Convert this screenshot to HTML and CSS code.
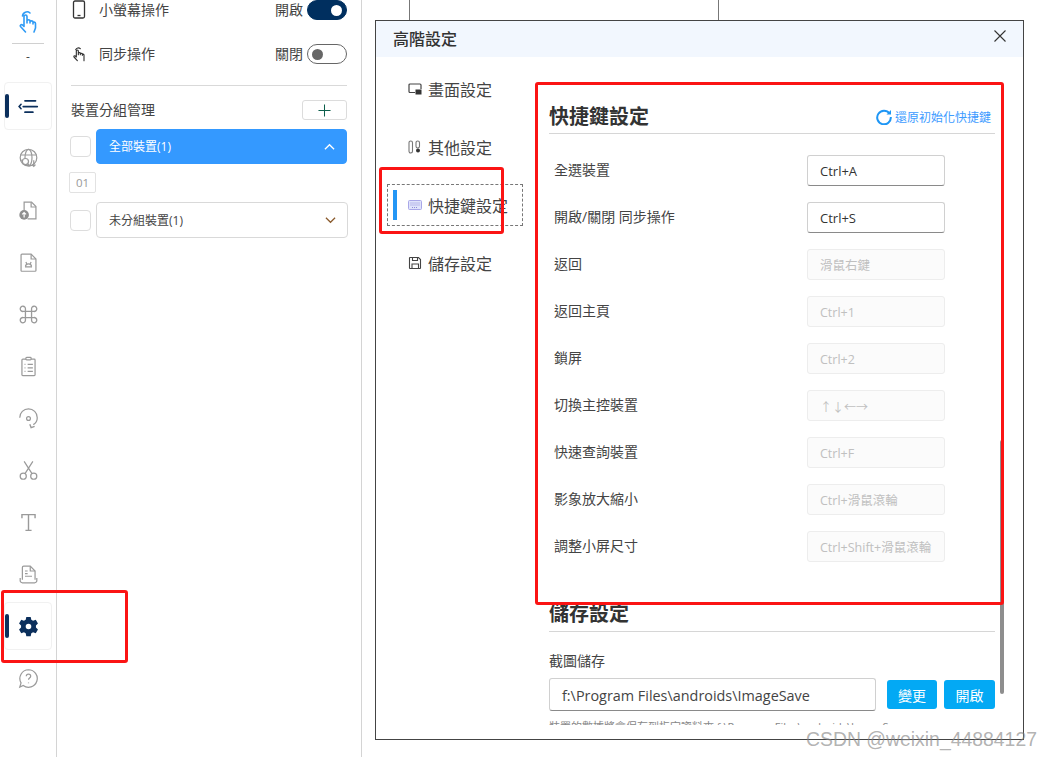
FILE: index.html
```html
<!DOCTYPE html>
<html lang="zh-Hant">
<head>
<meta charset="utf-8">
<title>高階設定</title>
<link rel="stylesheet" href="styles.css">
</head>
<body>
<div class="app">
  <nav class="rail">
    <div class="rail-top">
      <svg class="ico-top" viewBox="0 0 24 24" fill="none" stroke="#2f9bf5" stroke-width="1.600" stroke-linecap="round" stroke-linejoin="round"><path d="M6.500 6a4.500 4.500 0 0 1 7.500-3M9.500 22l-5-5.500c-.8-1 .5-2.500 2-1.500l1.500 1.500V6.500c0-2 3-2 3 0V13m0-2c0-1.600 3-1.600 3 0v2m0-1c0-1.500 3-1.500 3 0v2m0-1c0-1.300 2.500-1.300 2.500 .5V18l-1.500 4"/></svg>
      <div class="rail-rule"></div>
      <div class="rail-dash">-</div>
    </div>
    <div class="rail-item active"><span class="mark"></span>
      <svg class="ico" viewBox="0 0 24 24" fill="none" stroke="#0b2f5c" stroke-width="2" stroke-linecap="round"><path d="M8 5.500h12M6 12h16M8 18.500h9"/><path d="M3.500 9.500 1.300 12l2.200 2.500" stroke-width="1.800"/></svg>
    </div>
    <div class="rail-item">
      <svg class="ico" viewBox="0 0 24 24" fill="none" stroke="#9a9a9a" stroke-width="1.400"><circle cx="12" cy="11" r="9.500"/><ellipse cx="12" cy="11" rx="4" ry="9.500"/><path d="M2.500 8h19M2.500 14h7"/><circle cx="8.500" cy="15.500" r="3.500" fill="#fff"/><path d="m11 18 3 3M18 14v7m-2-2 2 2 2-2"/></svg>
    </div>
    <div class="rail-item">
      <svg class="ico" viewBox="0 0 24 24" fill="none" stroke="#9a9a9a" stroke-width="1.400"><path d="M7 12V2.500h8.500l5 5v14H11"/><path d="M15 2.500V8h5.500"/><circle cx="7" cy="17" r="5.500" fill="#8f8f8f" stroke="none"/><path d="M7 20v-5.500m-2.200 2 2.200-2.200 2.200 2.200" stroke="#fff"/></svg>
    </div>
    <div class="rail-item">
      <svg class="ico" viewBox="0 0 24 24" fill="none" stroke="#9a9a9a" stroke-width="1.400"><path d="M4.500 2.500H15l5.500 5.500v13a1 1 0 0 1-1 1h-15a1 1 0 0 1-1-1V3.500a1 1 0 0 1 1-1z"/><path d="M15 2.500V8h5.500M8 17h8M8.500 16.500c.5-4 6.500-4 7 0M9 11.500l1 2M15 11.500l-1 2"/></svg>
    </div>
    <div class="rail-item">
      <svg class="ico" viewBox="0 0 24 24" fill="none" stroke="#9a9a9a" stroke-width="1.500"><path d="M8.500 8.500h7v7h-7zM8.500 8.500H6A3 3 0 1 1 8.500 6v2.500zM15.500 8.500H18A3 3 0 1 0 15.500 6v2.500zM8.500 15.500H6A3 3 0 1 0 8.500 18v-2.500zM15.500 15.500H18A3 3 0 1 1 15.500 18v-2.500z"/></svg>
    </div>
    <div class="rail-item">
      <svg class="ico" viewBox="0 0 24 24" fill="none" stroke="#9a9a9a" stroke-width="1.400"><rect x="4.500" y="3.500" width="15" height="19" rx="1"/><rect x="9" y="1.500" width="6" height="3" rx="1" fill="#fff"/><path d="M11 9.500h6M11 13.500h6M11 17.500h6M7.500 9.500h1M7.500 13.500h1M7.500 17.500h1"/></svg>
    </div>
    <div class="rail-item">
      <svg class="ico" viewBox="0 0 24 24" fill="none" stroke="#9a9a9a" stroke-width="1.400"><path d="M2 11a10 10 0 0 1 20 0c0 3.500-2 6.500-4.500 8"/><circle cx="12" cy="12" r="2.200"/><path d="M13.500 18.500l1.500 4 4-1.500" stroke-width="1.600"/></svg>
    </div>
    <div class="rail-item">
      <svg class="ico" viewBox="0 0 24 24" fill="none" stroke="#9a9a9a" stroke-width="1.400"><circle cx="6" cy="18.500" r="3.500"/><circle cx="18" cy="18.500" r="3.500"/><path d="M8 15.500 17 1.500M16 15.500 7 1.500"/></svg>
    </div>
    <div class="rail-item">
      <svg class="ico" viewBox="0 0 24 24" fill="none" stroke="#9a9a9a" stroke-width="1.600"><path d="M4.500 7V3h15v4M12 3v18M8.500 21h7"/></svg>
    </div>
    <div class="rail-item">
      <svg class="ico" viewBox="0 0 24 24" fill="none" stroke="#9a9a9a" stroke-width="1.400"><path d="M5 18V4a1.500 1.500 0 0 1 1.500-1.500H14l5.500 5.500v10"/><path d="M14 2.500V8h5.500M8 8h3M8 11h3M8 14h8"/><path d="M2.500 16v3a2.500 2.500 0 0 0 2.500 2.500h14a2.500 2.500 0 0 0 2.500-2.500v-3"/></svg>
    </div>
    <div class="rail-item active"><span class="mark"></span>
      <svg class="ico" viewBox="0 0 24 24"><path fill="#0b2f5c" fill-rule="evenodd" d="M9.500 1h5l.7 3.200 2 1.200 3.100-1 2.500 4.300-2.300 2.200v2.200l2.300 2.200-2.500 4.300-3.100-1-2 1.200-.7 3.200h-5l-.7-3.200-2-1.200-3.100 1L1.200 15.300l2.300-2.200v-2.200L1.200 8.700l2.500-4.300 3.100 1 2-1.200zM12 8.800a3.200 3.200 0 1 0 0 6.400 3.200 3.200 0 0 0 0-6.400z"/></svg>
    </div>
    <div class="rail-item">
      <svg class="ico" viewBox="0 0 24 24" fill="none" stroke="#9a9a9a" stroke-width="1.400"><path d="M12 2a10 10 0 1 1-6 18l-4 1.800L3.500 17A10 10 0 0 1 12 2z"/><path d="M9.500 9.500c0-3.200 5-3.200 5 0 0 2-2.500 2-2.500 4M12 16.500v1"/></svg>
    </div>
  </nav>

  <aside class="panel">
    <div class="op-row">
      <svg class="op-ico" viewBox="0 0 16 20" fill="none" stroke="#333" stroke-width="1.300"><rect x="2.500" y="1" width="11" height="17" rx="1.500"/><path d="M6.500 15.500h3"/></svg>
      <span class="op-label">小螢幕操作</span>
      <span class="op-state">開啟</span>
      <span class="toggle on"><i></i></span>
    </div>
    <div class="op-row next">
      <svg class="op-ico" viewBox="0 0 24 24" fill="none" stroke="#333" stroke-width="1.700" stroke-linecap="round" stroke-linejoin="round"><path d="M7 5.500a4.500 4.500 0 0 1 7-1.500M9.500 22l-5-5.500c-.8-1 .5-2.500 2-1.500l1.500 1.500V7.500c0-2 3-2 3 0V13m0-2c0-1.600 3-1.600 3 0v2m0-1c0-1.500 3-1.500 3 0v2m0-1c0-1.300 2.500-1.300 2.500 .5V22"/></svg>
      <span class="op-label">同步操作</span>
      <span class="op-state">關閉</span>
      <span class="toggle"><i></i></span>
    </div>
    <div class="panel-rule"></div>
    <div class="group-head">
      <span class="group-title">裝置分組管理</span>
      <button class="add-btn"><svg viewBox="0 0 14 14" fill="none" stroke="#0d5f4c" stroke-width="1.100"><path d="M7 .5v13M.5 7h13"/></svg></button>
    </div>
    <div class="group-row">
      <span class="check"></span>
      <div class="group-box selected"><span class="group-name">全部裝置(1)</span>
        <svg class="chev" viewBox="0 0 12 8" fill="none" stroke="#fff" stroke-width="1.400"><path d="M1 6.500 6 1.500l5 5"/></svg>
      </div>
    </div>
    <div class="chip">01</div>
    <div class="group-row">
      <span class="check"></span>
      <div class="group-box"><span class="group-name">未分組裝置(1)</span>
        <svg class="chev" viewBox="0 0 12 8" fill="none" stroke="#8a5a2c" stroke-width="1.300"><path d="M1 1.500l5 5 5-5"/></svg>
      </div>
    </div>
  </aside>

  <div class="backdrop"></div>
</div>

<section class="dialog">
  <header class="dialog-head">
    <h1>高階設定</h1>
    <svg class="close" viewBox="0 0 12 12" fill="none" stroke="#333" stroke-width="1.100"><path d="M.5.500l11 11M11.500.5l-11 11"/></svg>
  </header>
  <div class="dialog-body">
    <ul class="tabs">
      <li class="tab"><svg viewBox="0 0 14 14" fill="none" stroke="#444" stroke-width="1.200"><path d="M7 10.500H2a1 1 0 0 1-1-1V3a1 1 0 0 1 1-1h10a1 1 0 0 1 1 1v4"/><rect x="7.500" y="7.500" width="6" height="5" fill="#333" stroke="none"/></svg>畫面設定</li>
      <li class="tab"><svg viewBox="0 0 14 14" fill="none" stroke="#777" stroke-width="1.100"><rect x="1" y="1" width="3.500" height="12" rx="1.700"/><rect x="8" y="1" width="3.500" height="7" rx="1.700"/><circle cx="10" cy="10.500" r="2" fill="#333" stroke="none"/></svg>其他設定</li>
      <li class="tab current"><span class="tab-bar"></span><svg viewBox="0 0 14 14" fill="#dfe3fb" stroke="#a9a7e8" stroke-width="1"><rect x=".5" y="2.500" width="13" height="9" rx="1"/><path d="M2.500 5h9M2.500 7h9M4 9.500h6" stroke="#8f8bd8" stroke-dasharray="1 1"/></svg>快捷鍵設定</li>
      <li class="tab"><svg viewBox="0 0 14 14" fill="none" stroke="#444" stroke-width="1.100"><path d="M2 1.500h8.500l2 2V12a.5.5 0 0 1-.5.500H2a.5.5 0 0 1-.5-.5V2a.5.5 0 0 1 .5-.5z"/><path d="M4.500 1.500v3h5v-3M4 12.500V8h6.500v4.500"/></svg>儲存設定</li>
    </ul>
    <div class="content">
      <div class="section-head">
        <h2>快捷鍵設定</h2>
        <a class="reset"><svg viewBox="0 0 16 16" fill="none" stroke="#1e96f5" stroke-width="2"><path d="M13.500 4.500A6.800 6.800 0 1 0 14.800 8"/><path d="M15 1v4.500h-4.500z" fill="#1e96f5" stroke="none"/></svg>還原初始化快捷鍵</a>
      </div>
      <div class="key-list">
        <div class="key-row"><span class="key-name">全選裝置</span><span class="key">Ctrl+A</span></div>
        <div class="key-row"><span class="key-name">開啟/關閉 同步操作</span><span class="key">Ctrl+S</span></div>
        <div class="key-row"><span class="key-name">返回</span><span class="key off">滑鼠右鍵</span></div>
        <div class="key-row"><span class="key-name">返回主頁</span><span class="key off">Ctrl+1</span></div>
        <div class="key-row"><span class="key-name">鎖屏</span><span class="key off">Ctrl+2</span></div>
        <div class="key-row"><span class="key-name">切換主控裝置</span><span class="key off arrows">↑↓←→</span></div>
        <div class="key-row"><span class="key-name">快速查詢裝置</span><span class="key off">Ctrl+F</span></div>
        <div class="key-row"><span class="key-name">影象放大縮小</span><span class="key off">Ctrl+滑鼠滾輪</span></div>
        <div class="key-row"><span class="key-name">調整小屏尺寸</span><span class="key off">Ctrl+Shift+滑鼠滾輪</span></div>
      </div>
      <div class="section-head save">
        <h2>儲存設定</h2>
      </div>
      <div class="save-label">截圖儲存</div>
      <div class="save-row">
        <div class="path">f:\Program Files\androids\ImageSave</div>
        <button class="btn">變更</button>
        <button class="btn wide">開啟</button>
      </div>
      <p class="save-note">裝置的數據將會保存到指定資料夾 f:\Program Files\androids\ImageSave</p>
    </div>
  </div>
  <span class="scrollbar"></span>
</section>

<div class="mark-box box-gear"></div>
<div class="mark-box box-tab"></div>
<div class="mark-box box-keys"></div>
<div class="watermark">CSDN @weixin_44884127</div>
</body>
</html>
```

FILE: styles.css
```css
* { box-sizing: border-box; }
html, body { margin: 0; height: 100%; background: #fff; overflow: hidden; }
body {
  position: relative;
  font-family: "Open Sans", "Noto Sans CJK TC", sans-serif;
  color: #333;
  font-size: 14px;
}
.app { display: flex; height: 757px; }

/* left rail */
.rail {
  width: 57px;
  flex: none;
  border-right: 1px solid #d4d4d4;
  padding: 0 4px;
  display: flex;
  flex-direction: column;
}
.rail-top { height: 80px; display: flex; flex-direction: column; align-items: center; padding-top: 10px; }
.ico-top { width: 24px; height: 24px; flex: none; }
.rail-rule { width: 32px; height: 1px; background: #d0d0d0; margin-top: 9px; flex: none; }
.rail-dash { font-size: 12px; line-height: 16px; margin-top: 5px; color: #444; }
.rail-item {
  height: 48px;
  margin: 2px 0;
  flex: none;
  display: flex;
  align-items: center;
  justify-content: center;
  position: relative;
  border: 1px solid transparent;
  border-radius: 4px;
}
.rail-item.active { border-color: #f1f1f1; }
.mark {
  position: absolute;
  left: 0;
  top: 11px;
  width: 4px;
  height: 24px;
  border-radius: 2px;
  background: #0b2f5c;
}
.ico { width: 21px; height: 21px; }

/* device panel */
.panel {
  width: 305px;
  flex: none;
  border-right: 1px solid #d4d4d4;
  padding: 0 14px 0 14px;
}
.op-row { display: flex; align-items: center; height: 20px; }
.op-row.next { margin-top: 24px; }
.op-ico { width: 16px; height: 20px; margin-right: 12px; flex: none; }
.op-label { flex: 1; font-size: 14px; color: #444; line-height: 20px; margin-bottom: 1px; }
.op-state { font-size: 14px; color: #444; margin-right: 4px; margin-bottom: 2px; }
.toggle {
  width: 40px;
  height: 20px;
  border-radius: 10px;
  border: 1px solid #666;
  display: flex;
  align-items: center;
  padding: 0 4px;
}
.toggle i { width: 11px; height: 11px; border-radius: 50%; background: #666; }
.toggle.on { background: #002f5f; border-color: #002f5f; justify-content: flex-end; }
.toggle.on i { background: #fff; }
.panel-rule { height: 1px; background: #d9d9d9; margin-top: 21px; }
.group-head {
  display: flex;
  align-items: center;
  justify-content: space-between;
  height: 20px;
  margin-top: 14px;
  font-size: 14px;
  color: #444;
}
.group-title { margin-bottom: 2px; }
.add-btn {
  width: 45px;
  height: 20px;
  padding: 0;
  background: #fff;
  border: 1px solid #dcdcdc;
  border-radius: 3px;
  display: flex;
  align-items: center;
  justify-content: center;
}
.add-btn svg { width: 13px; height: 13px; }
.group-row { display: flex; align-items: center; gap: 5px; margin: 9px -1px 0 -1px; }
.check { width: 21px; height: 21px; flex: none; border: 1px solid #ddd; border-radius: 4px; background: #fff; }
.group-box {
  flex: 1;
  height: 36px;
  border: 1px solid #d9d9d9;
  border-radius: 4px;
  padding: 0 11px 0 12px;
  display: flex;
  align-items: center;
  justify-content: space-between;
  font-size: 12px;
  color: #444;
}
.group-box.selected { height: 35px; background: #3499ff; border-color: #3499ff; color: #fff; margin-right: 1px; }
.group-box.selected .group-name { margin-bottom: 1px; }
.chev { width: 11px; height: 8px; }
.chip {
  width: 27px;
  height: 21px;
  margin: 8px 0 0 -2px;
  border: 1px solid #e2e2e2;
  border-radius: 2px;
  font-size: 11.500px;
  line-height: 19px;
  text-align: center;
  color: #999;
}
.backdrop { flex: 1; }
.backdrop::before {
  content: "";
  display: block;
  width: 308px;
  height: 20px;
  margin-left: 47px;
  border-left: 1px solid #777;
  border-right: 1px solid #777;
}

/* dialog */
.dialog {
  position: absolute;
  left: 375px;
  top: 20px;
  width: 649px;
  height: 720px;
  background: #fff;
  border: 1px solid #444;
  display: flex;
  flex-direction: column;
}
.dialog-head {
  height: 36px;
  flex: none;
  background: #f2f7fe;
  display: flex;
  align-items: center;
  justify-content: space-between;
  padding: 0 17px 2px 17px;
}
.dialog-head h1 { margin: 0; font-size: 16px; font-weight: 500; color: #333; }
.close { width: 12px; height: 12px; margin-top: -4px; }
.dialog-body { flex: 1; display: flex; min-height: 0; align-items: flex-start; }
.tabs { list-style: none; margin: 0; padding: 11px 0 0 11px; width: 173px; flex: none; }
.tab {
  position: relative;
  width: 136px;
  height: 42px;
  margin-bottom: 16px;
  padding-left: 20px;
  display: flex;
  align-items: center;
  gap: 6px;
  font-size: 16px;
  color: #444;
  border: 1px solid transparent;
}
.tab svg { width: 14px; height: 14px; flex: none; }
.tab.current { border: 1px dashed #777; }
.tab-bar { position: absolute; left: 5px; top: 5px; width: 4px; height: 30px; background: #2496f5; }
.content { flex: 1; min-width: 0; height: 668px; overflow: hidden; padding-right: 28px; }
.section-head {
  display: flex;
  align-items: center;
  justify-content: space-between;
  height: 30px;
  margin-top: 47px;
  border-bottom: 1px solid #d6d6d6;
  padding-bottom: 4px;
}
.section-head h2 { margin: 0; font-size: 20px; font-weight: 700; color: #333; line-height: 26px; }
.reset { display: flex; align-items: center; gap: 3px; font-size: 12px; color: #3d9bff; margin-right: 4px; }
.reset svg { width: 16px; height: 16px; }
.key-list { padding: 13px 50px 0 5px; }
.key-row { display: flex; align-items: center; justify-content: space-between; height: 47px; font-size: 14px; color: #444; }
.key-name { margin-bottom: 4px; }
.key {
  width: 138px;
  height: 31px;
  border: 1px solid #d0d0d0;
  border-bottom-color: #8a8a8a;
  border-radius: 3px;
  padding: 0 12px;
  font-size: 13px;
  line-height: 31px;
  color: #333;
}
.key.off { background: #fbfbfb; border-color: #ededed; color: #c0c0c0; font-size: 12.500px; }
.key.arrows { font-family: "Noto Sans CJK TC", sans-serif; font-size: 12px; }
.section-head.save { margin-top: 30px; height: 32px; }
.save-label { margin-top: 19px; font-size: 14px; line-height: 20px; color: #444; }
.save-row { display: flex; align-items: center; margin-top: 7px; }
.path {
  width: 327px;
  flex: none;
  height: 33px;
  border: 1px solid #d0d0d0;
  border-bottom-color: #8a8a8a;
  border-radius: 3px;
  padding: 0 12px;
  line-height: 33px;
  font-size: 14.400px;
  color: #444;
  margin-right: 11px;
}
.btn {
  width: 50px;
  height: 29px;
  flex: none;
  margin-right: 7px;
  padding: 0;
  border: 0;
  border-radius: 3px;
  background: #03a9f4;
  color: #fff;
  font: inherit;
  font-size: 14px;
}
.btn.wide { width: 51px; margin-right: 0; }
.save-note { margin: 7px 0 0; font-size: 11px; color: #888; white-space: nowrap; }
.scrollbar { position: absolute; left: 624px; top: 419px; width: 4px; height: 254px; border-radius: 2px; background: #8e8e8e; }

/* annotation overlays */
.mark-box { position: absolute; border: 3px solid #fb1414; border-radius: 3px; }
.box-gear { left: 1px; top: 590px; width: 127px; height: 73px; }
.box-tab { left: 379px; top: 167px; width: 125px; height: 67px; }
.box-keys { left: 535px; top: 82px; width: 469px; height: 523px; }
.watermark {
  position: absolute;
  left: 806px;
  top: 726px;
  font-family: "Liberation Sans", sans-serif;
  font-size: 19.400px;
  line-height: 26px;
  color: rgba(130, 130, 130, .62);
  white-space: nowrap;
}
```
